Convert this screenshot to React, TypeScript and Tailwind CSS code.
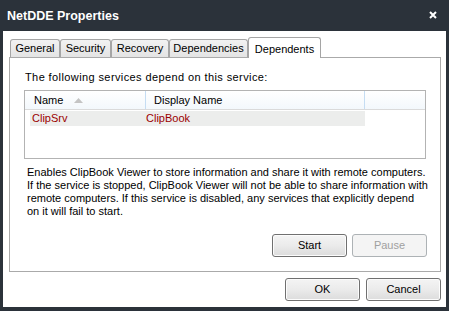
import React from "react";

const tabs = [
  { label: "General", w: "w-[50px]" },
  { label: "Security", w: "w-[51px]" },
  { label: "Recovery", w: "w-[58px]" },
  { label: "Dependencies", w: "w-[79px]" },
];

function WinButton({ label, disabled }: { label: string; disabled?: boolean }) {
  if (disabled) {
    return (
      <button
        type="button"
        className="w-[75px] h-[23px] rounded-[3px] border border-[#adb2b5] bg-[#f4f4f4] text-[11px] text-[#a0a0a0] leading-none"
      >
        {label}
      </button>
    );
  }
  return (
    <button
      type="button"
      className="w-[75px] h-[23px] rounded-[3px] border border-[#707070] bg-linear-to-b from-[#f4f4f4] via-[#ebebeb] to-[#dcdcdc] shadow-[inset_0_0_0_1px_#fcfcfc] text-[11px] text-black leading-none"
    >
      {label}
    </button>
  );
}

export default function App() {
  return (
    <div className="w-[449px] h-[311px] bg-[#2b323a] px-[3px] pb-[4px] flex flex-col font-['Liberation_Sans',Arial,sans-serif] select-none">
      {/* title bar */}
      <div className="h-[31px] flex items-center justify-between pl-[4px] pr-[9px] pt-[1px]">
        <span className="text-white font-bold text-[12.5px]">NetDDE Properties</span>
        <svg width="8" height="8" viewBox="0 0 8 8" className="mt-[-2px]">
          <path d="M1 1 L7 7 M7 1 L1 7" stroke="#ffffff" strokeWidth="2" />
        </svg>
      </div>

      {/* client area */}
      <div className="h-[276px] bg-white flex flex-col pt-[6px]">
        <div className="h-[20px] flex items-end pl-[7px]">
          {tabs.map((t) => (
            <div
              key={t.label}
              className={`${t.w} h-[18px] border border-b-0 border-[#a5a5a5] rounded-t-[3px] bg-linear-to-b from-[#f2f2f2] to-[#e4e4e4] text-[11px] text-black flex items-center justify-center`}
            >
              {t.label}
            </div>
          ))}
          <div className="relative z-10 w-[73px] h-[21px] -mb-px border border-b-0 border-[#a5a5a5] rounded-t-[3px] bg-white text-[11px] text-black flex items-start justify-center pt-[3px]">
            Dependents
          </div>
        </div>

        <div className="ml-[6px] w-[432px] h-[215px] border border-[#aaaaaa] flex flex-col">
          <div className="pt-[13px] pl-[15px] text-[11px] leading-[13px] text-black tracking-[0.4px]">
            The following services depend on this service:
          </div>

          <div className="mt-[6px] ml-[14px] w-[402px] h-[69px] border border-[#b3b3b3] flex flex-col">
            <div className="h-[19px] flex bg-linear-to-b from-white to-[#f3f8fc] border-b border-[#dadada] text-[11px] text-black">
              <div className="w-[121px] border-r border-[#c5ddf3] flex items-center pl-[9px] gap-[11px]">
                <span>Name</span>
                <svg width="9" height="5" viewBox="0 0 9 5">
                  <path d="M0 5 L4.5 0 L9 5 Z" fill="#c4c4c4" />
                </svg>
              </div>
              <div className="w-[219px] border-r border-[#c5ddf3] flex items-center pl-[8px]">Display Name</div>
            </div>
            <div className="mt-[1px] ml-[5px] w-[335px] h-[15px] bg-[#ecedec] flex items-center text-[11px] text-[#9b0000]">
              <span className="w-[116px] pl-[2px]">ClipSrv</span>
              <span>ClipBook</span>
            </div>
          </div>

          <div className="mt-[7px] pl-[17px] text-[11px] leading-[13px] text-black whitespace-nowrap">
            Enables ClipBook Viewer to store information and share it with remote computers.
            <br />
            If the service is stopped, ClipBook Viewer will not be able to share information with
            <br />
            remote computers. If this service is disabled, any services that explicitly depend
            <br />
            on it will fail to start.
          </div>

          <div className="mt-[16px] flex justify-end gap-[5px] pr-[13px]">
            <WinButton label="Start" />
            <WinButton label="Pause" disabled />
          </div>
        </div>

        <div className="mt-[6px] w-[438px] flex justify-end gap-[6px]">
          <WinButton label="OK" />
          <WinButton label="Cancel" />
        </div>
      </div>
    </div>
  );
}
